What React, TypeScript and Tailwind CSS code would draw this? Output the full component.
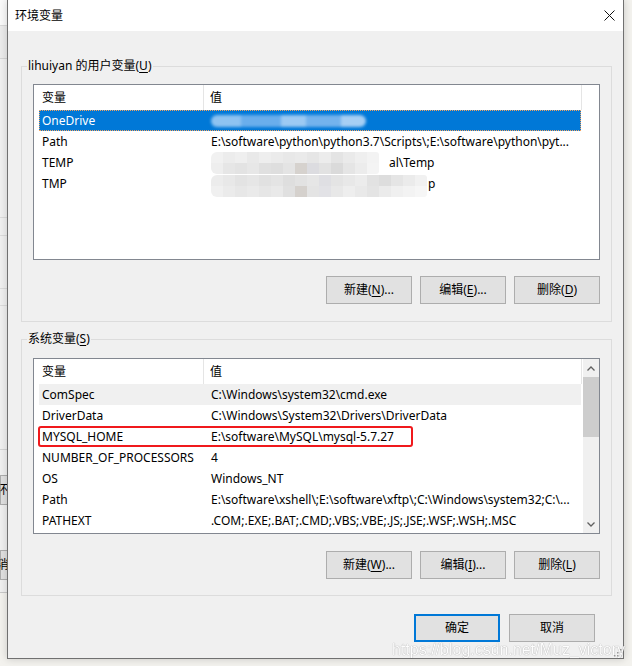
import React from "react";
import clsx from "clsx";

type Row = {
  name: string;
  value: React.ReactNode;
  selected?: boolean;
  soft?: boolean;
  marked?: boolean;
};

const tempShades = [
  ["bg-[#f1f1f1]", "bg-[#ececec]", "bg-[#efefef]", "bg-[#e9e9e9]", "bg-[#eeeeee]", "bg-[#ebebeb]", "bg-[#e8e8e8]", "bg-[#eaeaea]", "bg-[#e6e6e6]", "bg-[#ececec]", "bg-[#e4e4e4]", "bg-[#eaeaea]", "bg-[#efefef]", "bg-[#f3f3f3]"],
  ["bg-[#eeeeee]", "bg-[#e6e6e6]", "bg-[#e3e3e3]", "bg-[#e7e7e7]", "bg-[#e0e0e0]", "bg-[#dedede]", "bg-[#e4e4e4]", "bg-[#d6d2ce]", "bg-[#dcdce0]", "bg-[#e2e2e2]", "bg-[#dadada]", "bg-[#e5e5e5]", "bg-[#ececec]", "bg-[#f4f4f4]"],
];

const tmpShades = [
  ["bg-[#ececec]", "bg-[#e8e8e8]", "bg-[#e3e3e3]", "bg-[#e6e6e6]", "bg-[#e1e1e1]", "bg-[#e4e4e4]", "bg-[#dedede]", "bg-[#e2e2e2]", "bg-[#e6e6e6]", "bg-[#dfdfe3]", "bg-[#e4e4e4]", "bg-[#e8e8e8]", "bg-[#ececec]", "bg-[#e2e2e2]", "bg-[#dddddd]", "bg-[#e5e5e5]", "bg-[#ebebeb]", "bg-[#f1f1f1]"],
  ["bg-[#f0f0f0]", "bg-[#ebebeb]", "bg-[#e7e7e7]", "bg-[#eaeaea]", "bg-[#e6e6e6]", "bg-[#e9e9e9]", "bg-[#e0e0e0]", "bg-[#d5d1cd]", "bg-[#e4e4e4]", "bg-[#e2e2e6]", "bg-[#e8e8e8]", "bg-[#eeeeee]", "bg-[#e9e9e9]", "bg-[#e4e4e4]", "bg-[#ebebeb]", "bg-[#f0f0f0]", "bg-[#f3f3f3]", "bg-[#f6f6f6]"],
];

const Mosaic = ({ shades }: { shades: string[][] }) => (
  <div className="flex flex-col overflow-hidden rounded-l-[6px] rounded-r-[3px]">
    {shades.map((line, i) => (
      <div key={i} className="flex">
        {line.map((c, j) => (
          <div key={j} className={clsx("h-[11px] w-[12px]", c)} />
        ))}
      </div>
    ))}
  </div>
);

const Key = ({ k }: { k: string }) => (
  <span className="underline decoration-1 underline-offset-[2px]">{k}</span>
);

const Btn = ({ label, k, dots }: { label: string; k?: string; dots?: boolean }) => (
  <button className="flex h-[28px] w-[86px] items-center justify-center border border-[#adadad] bg-[#e1e1e1] text-[12px] text-black">
    {label}
    {k && (
      <>
        (<Key k={k} />)
      </>
    )}
    {dots && "..."}
  </button>
);

const Scrollbar = () => (
  <div className="flex h-full flex-col bg-[#f0f0f0]">
    <div className="flex h-[18px] items-center justify-center">
      <svg width="8" height="5" viewBox="0 0 8 5">
        <polyline points="0.5,4.5 4,1 7.5,4.5" fill="none" stroke="#606060" strokeWidth="1.3" />
      </svg>
    </div>
    <div className="h-[60px] bg-[#cdcdcd]" />
    <div className="flex-1" />
    <div className="flex h-[18px] items-center justify-center">
      <svg width="8" height="5" viewBox="0 0 8 5">
        <polyline points="0.5,0.5 4,4 7.5,0.5" fill="none" stroke="#606060" strokeWidth="1.3" />
      </svg>
    </div>
  </div>
);

const VarList = ({ rows, scrollbar }: { rows: Row[]; scrollbar?: boolean }) => (
  <div className="flex h-[176px] border border-[#828790] bg-white text-[12px] text-black">
    <div className="flex w-[548px] flex-col">
      <div className="flex h-[25px] shrink-0">
        <div className="flex h-full w-[170px] items-center border-r border-[#e5e5e5] pl-[8px]">变量</div>
        <div className="flex h-full flex-1 items-center border-r border-[#e5e5e5] pl-[6px]">值</div>
      </div>
      {rows.map((r) => (
        <div
          key={r.name}
          className={clsx(
            "relative mr-[1px] ml-[5px] flex h-[21px] shrink-0 items-center",
            r.selected &&
              "bg-[#0078d7] text-white outline-1 outline-offset-[-1px] outline-[#f4a460] outline-dotted",
            r.soft && "bg-[#f0f0f0]"
          )}
        >
          <div className="w-[165px] shrink-0 pl-[3px] whitespace-nowrap">{r.name}</div>
          <div className="flex flex-1 items-center pl-[7px] whitespace-nowrap">{r.value}</div>
          {r.marked && (
            <div className="pointer-events-none absolute top-0 -left-[1px] h-[21px] w-[375px] rounded-[3px] border-2 border-[#f0191c]" />
          )}
        </div>
      ))}
    </div>
    <div className="ml-[1px] w-[16px]">{scrollbar && <Scrollbar />}</div>
  </div>
);

const userRows: Row[] = [
  {
    name: "OneDrive",
    selected: true,
    value: (
      <div className="flex h-[12px] w-[155px] overflow-hidden rounded-full blur-[1.5px]">
        <div className="w-[30px] bg-[#8ec3f1]" />
        <div className="w-[40px] bg-[#6aaeec]" />
        <div className="w-[25px] bg-[#9ccaf3]" />
        <div className="w-[35px] bg-[#74b3ed]" />
        <div className="w-[25px] bg-[#a6cff4]" />
      </div>
    ),
  },
  {
    name: "Path",
    value: "E:\\software\\python\\python3.7\\Scripts\\;E:\\software\\python\\pyt...",
  },
  {
    name: "TEMP",
    value: (
      <>
        <Mosaic shades={tempShades} />
        <span className="ml-[10px]">al\Temp</span>
      </>
    ),
  },
  {
    name: "TMP",
    value: (
      <>
        <div className="mt-[4px]">
          <Mosaic shades={tmpShades} />
        </div>
        <span className="ml-[1px]">p</span>
      </>
    ),
  },
];

const sysRows: Row[] = [
  { name: "ComSpec", value: "C:\\Windows\\system32\\cmd.exe", soft: true },
  { name: "DriverData", value: "C:\\Windows\\System32\\Drivers\\DriverData" },
  { name: "MYSQL_HOME", value: "E:\\software\\MySQL\\mysql-5.7.27", marked: true },
  { name: "NUMBER_OF_PROCESSORS", value: "4" },
  { name: "OS", value: "Windows_NT" },
  { name: "Path", value: "E:\\software\\xshell\\;E:\\software\\xftp\\;C:\\Windows\\system32;C:\\..." },
  { name: "PATHEXT", value: ".COM;.EXE;.BAT;.CMD;.VBS;.VBE;.JS;.JSE;.WSF;.WSH;.MSC" },
];

const App = () => {
  return (
    <div className="relative h-[666px] w-[632px] overflow-hidden bg-[#f3f2ee] font-['Noto_Sans','Noto_Sans_CJK_SC',sans-serif] text-[12px] text-black">
      {/* window behind the dialog */}
      <div className="absolute top-0 left-0 flex h-[593px] w-[20px] flex-col border-b border-[#c9c9c9] bg-[#f0f0f0]">
        <div className="h-[26px] border-b border-[#dadada] bg-[#fafafa]" />
        <div className="h-[33px] border-b border-[#d6d6d6] bg-[#ececec]" />
        <div className="mt-[158px] h-[19px] border-y border-[#dcdcdc]" />
        <div className="mt-[52px] h-[18px] border-y border-[#dcdcdc]" />
        <div className="mt-[143px] h-px bg-[#d4d4d4]" />
        <div className="mt-[25px] flex h-[30px] items-center border border-[#adadad] bg-[#e1e1e1] pl-0">
          <span className="-ml-[5px]">环</span>
        </div>
        <div className="mt-[45px] flex h-[30px] items-center border border-[#adadad] bg-[#e1e1e1]">
          <span className="-ml-[4px]">消</span>
        </div>
      </div>

      {/* dialog */}
      <div className="absolute top-0 left-[7px] flex h-[659px] w-[617px] flex-col border-x border-b border-[#707070] bg-[#f0f0f0] shadow-[0_0_8px_rgba(0,0,0,0.18)]">
        <div className="flex h-[31px] shrink-0 items-center justify-between bg-white pr-[8px] pl-[7px]">
          <span>环境变量</span>
          <svg width="11" height="11" viewBox="0 0 11 11">
            <path d="M0.5 0.5 L10.5 10.5 M10.5 0.5 L0.5 10.5" stroke="#111" strokeWidth="1" />
          </svg>
        </div>

        <fieldset className="mt-[27px] mr-[11px] ml-[13px] border border-[#dcdcdc] px-[11px] pb-[17px]">
          <legend className="-ml-[6px] px-[1px] leading-[16px]">
            lihuiyan 的用户变量(<Key k="U" />)
          </legend>
          <div className="mt-[10px]">
            <VarList rows={userRows} />
          </div>
          <div className="mt-[16px] flex justify-end gap-[8px]">
            <Btn label="新建" k="N" dots />
            <Btn label="编辑" k="E" dots />
            <Btn label="删除" k="D" />
          </div>
        </fieldset>

        <fieldset className="mt-[9px] mr-[11px] ml-[13px] border border-[#dcdcdc] px-[11px] pb-[16px]">
          <legend className="-ml-[6px] px-[1px] leading-[16px]">
            系统变量(<Key k="S" />)
          </legend>
          <div className="mt-[11px]">
            <VarList rows={sysRows} scrollbar />
          </div>
          <div className="mt-[17px] flex justify-end gap-[8px]">
            <Btn label="新建" k="W" dots />
            <Btn label="编辑" k="I" dots />
            <Btn label="删除" k="L" />
          </div>
        </fieldset>

        <div className="mt-[18px] mr-[28px] flex justify-end gap-[9px]">
          <button className="flex h-[28px] w-[86px] items-center justify-center border-2 border-[#0078d7] bg-[#e1e1e1] text-[12px]">
            确定
          </button>
          <Btn label="取消" />
        </div>

        {/* resize grip */}
        <svg className="absolute right-[1px] bottom-[1px]" width="8" height="8" viewBox="0 0 8 8">
          <rect x="6" y="0" width="1.5" height="1.5" fill="#9a9a9a" />
          <rect x="3" y="3" width="1.5" height="1.5" fill="#9a9a9a" />
          <rect x="6" y="3" width="1.5" height="1.5" fill="#9a9a9a" />
          <rect x="0" y="6" width="1.5" height="1.5" fill="#9a9a9a" />
          <rect x="3" y="6" width="1.5" height="1.5" fill="#9a9a9a" />
          <rect x="6" y="6" width="1.5" height="1.5" fill="#9a9a9a" />
        </svg>
      </div>

      {/* watermark */}
      <div className="pointer-events-none absolute top-[638px] left-[392px] font-['Liberation_Sans',sans-serif] text-[16px] whitespace-nowrap text-white opacity-90 [text-shadow:0_0_1px_rgba(0,0,0,0.5)]">
        https://blog.csdn.net/Muz_victory
      </div>
    </div>
  );
};

export default App;
